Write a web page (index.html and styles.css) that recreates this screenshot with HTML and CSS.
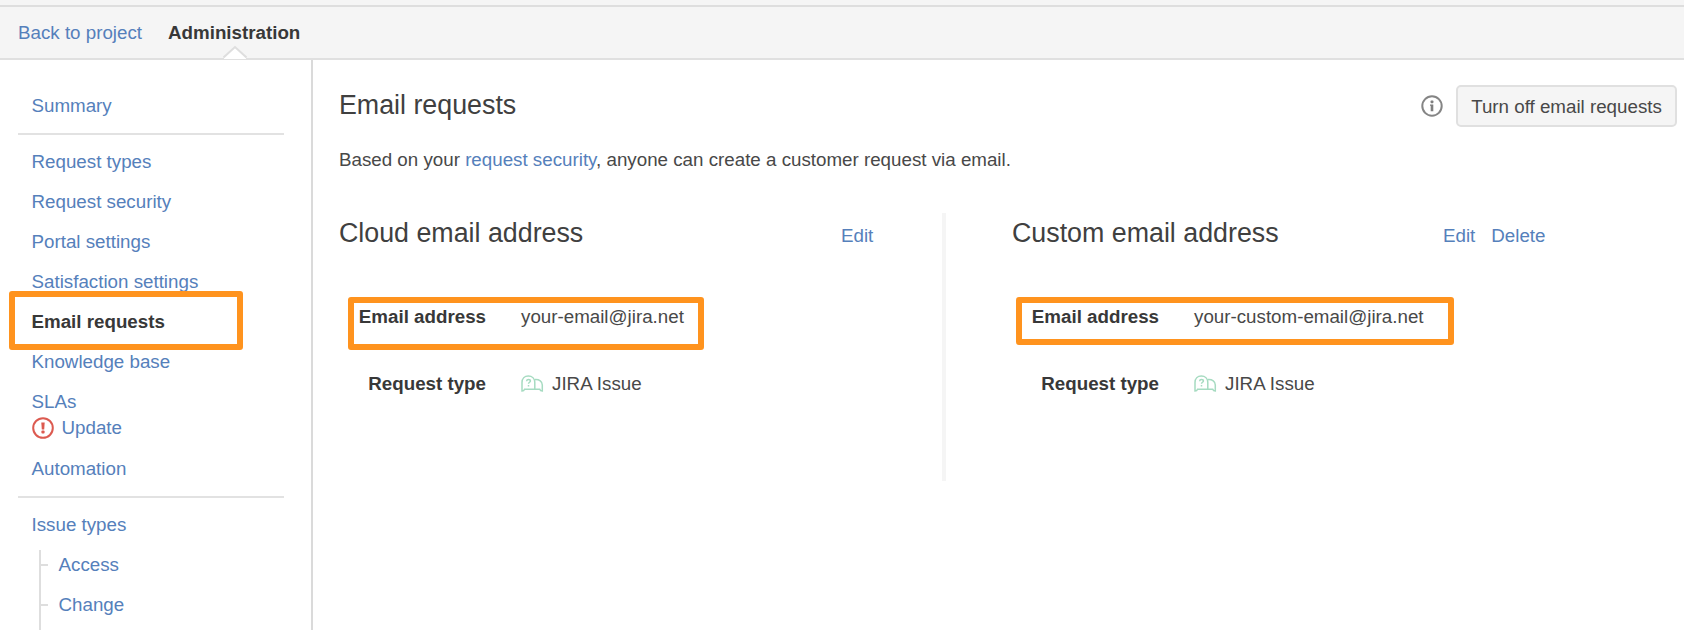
FILE: index.html
```html
<!DOCTYPE html>
<html lang="en">
<head>
<meta charset="utf-8">
<title>Email requests</title>
<link rel="stylesheet" href="styles.css">
</head>
<body>
<div class="topline"></div>
<header class="tabs">
  <a class="back">Back to project</a>
  <strong class="current">Administration
    <svg class="notch" width="24" height="14" viewBox="0 0 24 14"><path d="M1 14V12L12 2.500 23 12V14Z" fill="#fff"/><path d="M0.5 12.500L12 2 23.5 12.500" fill="none" stroke="#dedede" stroke-width="2"/></svg>
  </strong>
</header>
<div class="page">
  <nav class="sidebar">
    <div class="group">
      <a class="item">Summary</a>
    </div>
    <div class="group">
      <a class="item">Request types</a>
      <a class="item">Request security</a>
      <a class="item">Portal settings</a>
      <a class="item">Satisfaction settings</a>
      <a class="item active">Email requests<span class="mark mark-nav"></span></a>
      <a class="item">Knowledge base</a>
      <a class="item">SLAs</a>
      <a class="item update">
        <svg width="22" height="22" viewBox="0 0 22 22"><circle cx="11" cy="11" r="9.8" fill="none" stroke="#dc5a50" stroke-width="2"/><path d="M9.3 5.6h3.4l-.5 6.8h-2.4z" fill="#dc5a50"/><rect x="9.4" y="13.6" width="3.2" height="2.9" rx="1" fill="#dc5a50"/></svg>
        <span>Update</span>
      </a>
      <a class="item">Automation</a>
    </div>
    <div class="group">
      <a class="item">Issue types</a>
      <div class="tree">
        <a class="item leaf">Access</a>
        <a class="item leaf">Change</a>
      </div>
    </div>
  </nav>
  <main class="content">
    <div class="title-row">
      <h1>Email requests</h1>
      <div class="actions">
        <svg width="22" height="22" viewBox="0 0 22 22"><circle cx="11" cy="11" r="9.7" fill="none" stroke="#858585" stroke-width="2"/><rect x="9.6" y="5.6" width="2.800" height="2.600" rx=".6" fill="#7e7e7e"/><path d="M9 9.400h3.300v6.900H9.700v-5.500H9z" fill="#7e7e7e"/></svg>
        <button class="button">Turn off email requests</button>
      </div>
    </div>
    <p class="intro">Based on your <a>request security</a>, anyone can create a customer request via email.</p>
    <div class="columns">
      <section class="account cloud">
        <div class="account-head"><h2>Cloud email address</h2><a>Edit</a></div>
        <div class="field">
          <span class="label">Email address</span><span>your-email@jira.net</span>
          <span class="mark mark-cloud"></span>
        </div>
        <div class="field">
          <span class="label">Request type</span>
          <span class="type"><svg width="23" height="18" viewBox="0 0 23 18" fill="none" stroke="#a6dbc1" stroke-width="1.500"><path d="M1 16V7.500C1 3.600 3.600 1 7.300 1s6.500 2.600 6.500 6.500v6.700H3.600C3.200 15.300 2.300 16 1 16z"/><path d="M14 4.600c4.300-.3 7.300 1.800 7.300 5.400v6c-1.300 0-2.200-.7-2.600-1.800h-4.900"/><path d="M5.600 6.200c.1-1.200.8-1.800 1.900-1.800s1.900.6 1.900 1.600c0 1.200-1.900 1.300-1.900 2.700M7.500 9.900v1.600"/></svg>JIRA Issue</span>
        </div>
      </section>
      <section class="account custom">
        <div class="account-head"><h2>Custom email address</h2><a>Edit</a><a>Delete</a></div>
        <div class="field">
          <span class="label">Email address</span><span>your-custom-email@jira.net</span>
          <span class="mark mark-custom"></span>
        </div>
        <div class="field">
          <span class="label">Request type</span>
          <span class="type"><svg width="23" height="18" viewBox="0 0 23 18" fill="none" stroke="#a6dbc1" stroke-width="1.500"><path d="M1 16V7.500C1 3.600 3.600 1 7.300 1s6.500 2.600 6.500 6.500v6.700H3.600C3.200 15.300 2.300 16 1 16z"/><path d="M14 4.600c4.300-.3 7.300 1.800 7.300 5.400v6c-1.300 0-2.200-.7-2.600-1.800h-4.900"/><path d="M5.600 6.200c.1-1.200.8-1.800 1.900-1.800s1.900.6 1.900 1.600c0 1.200-1.900 1.300-1.900 2.700M7.500 9.900v1.600"/></svg>JIRA Issue</span>
        </div>
      </section>
    </div>
  </main>
</div>
</body>
</html>
```
FILE: styles.css
```css
* { box-sizing: border-box; }

body {
  margin: 0;
  height: 630px;
  display: flex;
  flex-direction: column;
  overflow: hidden;
  background: #fff;
  color: #484848;
  font: 18.75px/40px "Liberation Sans", Arial, sans-serif;
  white-space: nowrap;
}

a { color: #5580bb; }
svg { display: block; flex: none; }

.topline {
  flex: none;
  height: 7px;
  background: #f5f5f5;
  border-bottom: 2px solid #dedede;
}

.tabs {
  flex: none;
  display: flex;
  gap: 26px;
  height: 53px;
  padding: 6px 0 0 18px;
  background: #f5f5f5;
  border-bottom: 2px solid #e0e0e0;
}
.current { position: relative; color: #383838; }
.notch { position: absolute; left: 54.500px; bottom: -1px; }

.page { flex: 1; min-height: 0; display: flex; }

.sidebar {
  flex: none;
  width: 313px;
  padding: 26px 28px 0 18px;
  border-right: 2px solid #dadada;
}
.group { padding-left: 13.500px; }
.group + .group {
  margin-top: 6.500px;
  margin-right: -1px;
  padding-top: 7px;
  border-top: 2px solid #e2e2e2;
}
.item { display: block; height: 40.150px; }
.active { position: relative; color: #383838; font-weight: bold; }
.update {
  display: flex;
  align-items: center;
  gap: 8px;
  height: 26px;
  line-height: 26px;
  margin: -8px 0 8.600px;
}
.tree {
  position: relative;
  margin-left: 7px;
}
.tree::before {
  content: "";
  position: absolute;
  top: 5px;
  left: 0;
  width: 2px;
  height: 100px;
  background: #dedede;
}
.leaf { display: flex; align-items: center; }
.leaf::before {
  content: "";
  width: 9px;
  height: 2px;
  margin-right: 11px;
  background: #dedede;
}

.content { flex: 1; min-width: 0; padding: 25px 7px 0 26px; }

.title-row { display: flex; justify-content: space-between; height: 42px; }
h1, h2 { margin: 0; color: #404040; font-size: 26.800px; font-weight: normal; line-height: 40px; }
.actions { display: flex; align-items: center; gap: 13px; }
.button {
  width: 221px;
  height: 42px;
  padding: 0;
  border: 2px solid #e0e0e0;
  border-radius: 5px;
  background: #f5f5f5;
  color: #484848;
  font: inherit;
  line-height: 37px;
}

.intro { margin: 13px 0 0; height: 40px; }

.columns { display: flex; margin-top: 33px; }
.account { height: 268px; }
.cloud { width: 607px; border-right: 4px solid #f5f5f5; }
.custom { padding-left: 66px; }
.account-head { display: flex; align-items: baseline; gap: 16px; height: 84px; }
.account-head h2 { width: 486px; }
.custom .account-head h2 { width: 415px; }
.field { position: relative; display: flex; gap: 35px; height: 67px; }
.label { width: 147px; color: #383838; font-weight: bold; text-align: right; }
.type { display: flex; align-items: center; gap: 8px; height: 40px; }

/* Orange callout frames */
.mark {
  position: absolute;
  border: 6px solid #ff931e;
  border-radius: 3px;
}
.mark-nav { left: -22.500px; top: -11px; width: 234px; height: 59px; }
.mark-cloud { left: 9px; top: 0; width: 356px; height: 53px; }
.mark-custom { left: 4px; top: 0; width: 438px; height: 48px; }
```
